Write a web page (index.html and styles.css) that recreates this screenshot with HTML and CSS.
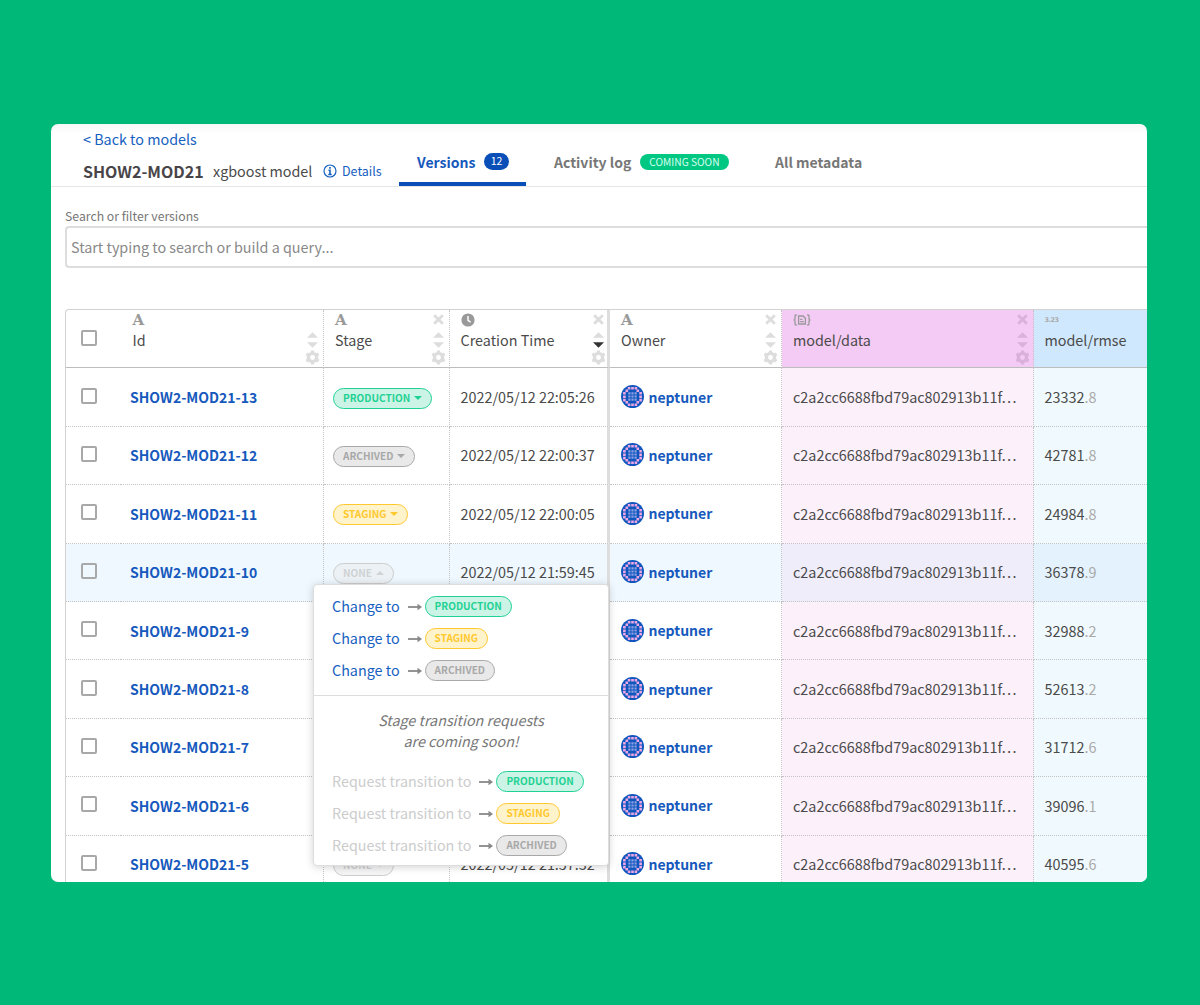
FILE: index.html
```html
<!DOCTYPE html>
<html lang="en">
<head>
    <meta charset="UTF-8">
    <meta name="viewport" content="width=device-width, initial-scale=1.0">
    <title>SHOW2-MOD21 - Versions</title>
    <link rel="stylesheet" href="styles.css">
</head>
<body>
    <svg class="sprite" width="0" height="0">
        <symbol id="close" viewBox="0 0 12 12"><path d="M2 2l8 8M10 2l-8 8" stroke="currentColor" stroke-width="2.6"/></symbol>
        <symbol id="up" viewBox="0 0 12 6"><path d="M0 6l6-6 6 6z" fill="currentColor"/></symbol>
        <symbol id="down" viewBox="0 0 12 6"><path d="M0 0h12l-6 6z" fill="currentColor"/></symbol>
        <symbol id="gear" viewBox="0 0 16 16">
            <circle cx="8" cy="8" r="4.4" fill="none" stroke="currentColor" stroke-width="3.6"/>
            <path d="M8 .5v3M8 12.5v3M1.5 4.2l2.6 1.5M11.9 10.3l2.6 1.5M1.5 11.8l2.6-1.5M11.9 5.7l2.6-1.5" stroke="currentColor" stroke-width="3.4"/>
        </symbol>
        <symbol id="arrow" viewBox="0 0 14 8"><path d="M0 4h11" stroke="currentColor" stroke-width="1.8"/><path d="M9.5 .8L14 4 9.5 7.2z" fill="currentColor"/></symbol>
        <symbol id="avatar" viewBox="0 0 23 23">
            <circle cx="11.5" cy="11.5" r="11.5" fill="#0f56bd"/>
            <g fill="none" stroke="#f0a8e4" stroke-width="2.6" stroke-dasharray="2.6 .8">
                <path d="M6.8 3.2h9.6M6.8 19.8h9.6M3.4 7v9.600M19.600 7v9.600"/>
                <path d="M4.500 5.800h3M15.500 5.800h3M4.500 17.200h3M15.500 17.200h3"/>
            </g>
            <g fill="none" stroke="#8fa0e4" stroke-width="2.2" stroke-dasharray="2.2 .9">
                <path d="M7.300 8.400h8.400M7.300 11.500h8.400M7.300 14.600h8.400"/>
            </g>
        </symbol>
    </svg>

    <div class="window">
        <header class="header">
            <div class="model">
                <a class="back">&lt; Back to models</a>
                <div class="model-title">
                    <h1>SHOW2-MOD21</h1>
                    <span class="model-name">xgboost model</span>
                    <a class="details">
                        <svg width="14" height="14" viewBox="0 0 14 14"><circle cx="7" cy="7" r="6" fill="none" stroke="currentColor" stroke-width="1.2"/><path d="M7 3v1.8M5.5 6.2H7v4.2M5.3 10.5h3.4" fill="none" stroke="currentColor" stroke-width="1.6"/></svg>
                        <span>Details</span>
                    </a>
                </div>
            </div>
            <nav class="tabs">
                <a class="tab active">Versions <span class="count">12</span></a>
                <a class="tab">Activity log <span class="soon">COMING SOON</span></a>
                <a class="tab">All metadata</a>
            </nav>
        </header>

        <div class="search">
            <label>Search or filter versions</label>
            <div class="search-input">Start typing to search or build a query...</div>
        </div>

        <div class="table">
            <div class="row head">
                <div class="cell check"><span class="box"></span></div>
                <div class="cell id"><div class="col-name"><span class="type">A</span>Id</div><div class="tools"><svg class="x"></svg><svg class="up"><use href="#up"/></svg><svg class="down"><use href="#down"/></svg><svg class="gear"><use href="#gear"/></svg></div></div>
                <div class="cell stage"><div class="col-name"><span class="type">A</span>Stage</div><div class="tools"><svg class="x"><use href="#close"/></svg><svg class="up"><use href="#up"/></svg><svg class="down"><use href="#down"/></svg><svg class="gear"><use href="#gear"/></svg></div></div>
                <div class="cell time"><div class="col-name"><span class="type"><svg width="14" height="14" viewBox="0 0 14 14"><circle cx="7" cy="7" r="6.6" fill="currentColor"/><path d="M7 3v4.4l2.6 1.8" fill="none" stroke="#fff" stroke-width="1.5"/></svg></span>Creation Time</div><div class="tools"><svg class="x"><use href="#close"/></svg><svg class="up"><use href="#up"/></svg><svg class="down sorted"><use href="#down"/></svg><svg class="gear"><use href="#gear"/></svg></div></div>
                <div class="cell owner"><div class="col-name"><span class="type">A</span>Owner</div><div class="tools"><svg class="x"><use href="#close"/></svg><svg class="up"><use href="#up"/></svg><svg class="down"><use href="#down"/></svg><svg class="gear"><use href="#gear"/></svg></div></div>
                <div class="cell data"><div class="col-name"><span class="type"><svg width="18" height="12" viewBox="0 0 18 12" fill="none" stroke="currentColor" stroke-width="1.3"><path d="M3.8 1H3Q2 1 2 2v2.5Q2 6 .6 6 2 6 2 7.5V10q0 1 1 1h.8M14.2 1h.8q1 0 1 1v2.5q0 1.500 1.400 1.500-1.400 0-1.400 1.500V10q0 1-1 1h-.8"/><path d="M5.600 2h4.600l2.200 2.200V10H5.600zM7.200 5.300h2.200M7.200 7.700h3.600"/></svg></span>model/data</div><div class="tools"><svg class="x"><use href="#close"/></svg><svg class="up"><use href="#up"/></svg><svg class="down"><use href="#down"/></svg><svg class="gear"><use href="#gear"/></svg></div></div>
                <div class="cell rmse"><div class="col-name"><span class="type num">3.23</span>model/rmse</div></div>
            </div>
            <div class="row">
                <div class="cell check"><span class="box"></span></div>
                <div class="cell id">SHOW2-MOD21-13</div>
                <div class="cell stage"><span class="badge production">PRODUCTION <svg><use href="#down"/></svg></span></div>
                <div class="cell time">2022/05/12 22:05:26</div>
                <div class="cell owner"><svg class="avatar"><use href="#avatar"/></svg>neptuner</div>
                <div class="cell data">c2a2cc6688fbd79ac802913b11f…</div>
                <div class="cell rmse">23332<span>.8</span></div>
            </div>
            <div class="row">
                <div class="cell check"><span class="box"></span></div>
                <div class="cell id">SHOW2-MOD21-12</div>
                <div class="cell stage"><span class="badge archived">ARCHIVED <svg><use href="#down"/></svg></span></div>
                <div class="cell time">2022/05/12 22:00:37</div>
                <div class="cell owner"><svg class="avatar"><use href="#avatar"/></svg>neptuner</div>
                <div class="cell data">c2a2cc6688fbd79ac802913b11f…</div>
                <div class="cell rmse">42781<span>.8</span></div>
            </div>
            <div class="row">
                <div class="cell check"><span class="box"></span></div>
                <div class="cell id">SHOW2-MOD21-11</div>
                <div class="cell stage"><span class="badge staging">STAGING <svg><use href="#down"/></svg></span></div>
                <div class="cell time">2022/05/12 22:00:05</div>
                <div class="cell owner"><svg class="avatar"><use href="#avatar"/></svg>neptuner</div>
                <div class="cell data">c2a2cc6688fbd79ac802913b11f…</div>
                <div class="cell rmse">24984<span>.8</span></div>
            </div>
            <div class="row selected">
                <div class="cell check"><span class="box"></span></div>
                <div class="cell id">SHOW2-MOD21-10</div>
                <div class="cell stage"><span class="badge none">NONE <svg><use href="#up"/></svg></span></div>
                <div class="cell time">2022/05/12 21:59:45</div>
                <div class="cell owner"><svg class="avatar"><use href="#avatar"/></svg>neptuner</div>
                <div class="cell data">c2a2cc6688fbd79ac802913b11f…</div>
                <div class="cell rmse">36378<span>.9</span></div>
            </div>
            <div class="row">
                <div class="cell check"><span class="box"></span></div>
                <div class="cell id">SHOW2-MOD21-9</div>
                <div class="cell stage"></div>
                <div class="cell time"></div>
                <div class="cell owner"><svg class="avatar"><use href="#avatar"/></svg>neptuner</div>
                <div class="cell data">c2a2cc6688fbd79ac802913b11f…</div>
                <div class="cell rmse">32988<span>.2</span></div>
            </div>
            <div class="row">
                <div class="cell check"><span class="box"></span></div>
                <div class="cell id">SHOW2-MOD21-8</div>
                <div class="cell stage"></div>
                <div class="cell time"></div>
                <div class="cell owner"><svg class="avatar"><use href="#avatar"/></svg>neptuner</div>
                <div class="cell data">c2a2cc6688fbd79ac802913b11f…</div>
                <div class="cell rmse">52613<span>.2</span></div>
            </div>
            <div class="row">
                <div class="cell check"><span class="box"></span></div>
                <div class="cell id">SHOW2-MOD21-7</div>
                <div class="cell stage"></div>
                <div class="cell time"></div>
                <div class="cell owner"><svg class="avatar"><use href="#avatar"/></svg>neptuner</div>
                <div class="cell data">c2a2cc6688fbd79ac802913b11f…</div>
                <div class="cell rmse">31712<span>.6</span></div>
            </div>
            <div class="row">
                <div class="cell check"><span class="box"></span></div>
                <div class="cell id">SHOW2-MOD21-6</div>
                <div class="cell stage"></div>
                <div class="cell time"></div>
                <div class="cell owner"><svg class="avatar"><use href="#avatar"/></svg>neptuner</div>
                <div class="cell data">c2a2cc6688fbd79ac802913b11f…</div>
                <div class="cell rmse">39096<span>.1</span></div>
            </div>
            <div class="row">
                <div class="cell check"><span class="box"></span></div>
                <div class="cell id">SHOW2-MOD21-5</div>
                <div class="cell stage"><span class="badge none">NONE <svg><use href="#down"/></svg></span></div>
                <div class="cell time">2022/05/12 21:57:32</div>
                <div class="cell owner"><svg class="avatar"><use href="#avatar"/></svg>neptuner</div>
                <div class="cell data">c2a2cc6688fbd79ac802913b11f…</div>
                <div class="cell rmse">40595<span>.6</span></div>
            </div>
        </div>

        <div class="menu">
            <div class="menu-items">
                <a class="item">Change to <svg><use href="#arrow"/></svg><span class="badge production">PRODUCTION</span></a>
                <a class="item">Change to <svg><use href="#arrow"/></svg><span class="badge staging">STAGING</span></a>
                <a class="item">Change to <svg><use href="#arrow"/></svg><span class="badge archived">ARCHIVED</span></a>
            </div>
            <p class="note">Stage transition requests<br>are coming soon!</p>
            <div class="menu-items disabled">
                <div class="item">Request transition to <svg><use href="#arrow"/></svg><span class="badge production">PRODUCTION</span></div>
                <div class="item">Request transition to <svg><use href="#arrow"/></svg><span class="badge staging">STAGING</span></div>
                <div class="item">Request transition to <svg><use href="#arrow"/></svg><span class="badge archived">ARCHIVED</span></div>
            </div>
        </div>
    </div>
</body>
</html>
```

FILE: styles.css
```css
* {
    box-sizing: border-box;
}

body {
    margin: 0;
    height: 1005px;
    padding: 124px 53px 0 51px;
    background-color: #00b877;
    font-family: "Noto Sans CJK JP", "Noto Sans", sans-serif;
    font-size: 14.35px;
    line-height: 20px;
    color: #4a4a4a;
    overflow: hidden;
}

.sprite {
    position: absolute;
}

.window {
    position: relative;
    height: 757.5px;
    background: linear-gradient(#f8f8f8, #fff 10px);
    border-radius: 7px;
    overflow: hidden;
}

/* header */
.header {
    display: flex;
    height: 63px;
    border-bottom: 1.5px solid #e6e6e6;
}

.model {
    width: 348px;
    padding: 5px 0 0 32px;
    white-space: nowrap;
}

.back {
    display: block;
    color: #1660c0;
}

.model-title {
    display: flex;
    align-items: center;
    margin-top: 11px;
}

h1 {
    width: 130px;
    margin: 0;
    font-size: 16px;
    font-weight: bold;
    line-height: 20px;
    color: #484448;
}

.model-name {
    width: 110px;
}

.details {
    display: flex;
    align-items: center;
    gap: 5px;
    padding-top: 1px;
    font-size: 12.5px;
    color: #1660c0;
}

.tabs {
    display: flex;
    font-size: 14px;
    font-weight: bold;
    color: #777;
}

.tab {
    display: flex;
    align-items: center;
    height: 62px;
    padding: 13px 0 0 28px;
    white-space: nowrap;
}

.tab.active {
    width: 127px;
    height: 62px;
    padding: 17px 0 0 18px;
    border-bottom: 4px solid #0a4fb8;
    color: #1659bd;
}

.tab:last-child {
    padding-left: 46.5px;
}

.count {
    margin-left: 9px;
    padding: 0 6.3px;
    height: 17px;
    margin-bottom: 1px;
    border-radius: 9px;
    background: #0a4fb8;
    color: #fff;
    font-size: 10.5px;
    font-weight: normal;
    line-height: 15px;
}

.soon {
    margin-left: 9px;
    padding: 0 9px;
    height: 16px;
    border-radius: 8px;
    background: #00c781;
    color: #d8fff0;
    font-size: 10.2px;
    font-weight: normal;
    line-height: 15px;
}

/* search */
.search {
    padding: 19px 0 0 14px;
}

.search label {
    display: block;
    font-size: 12.25px;
    color: #777;
}

.search-input {
    height: 42px;
    padding: 9px 4px;
    border: 2px solid #ddd;
    border-right: 0;
    border-radius: 4px 0 0 4px;
    color: #888;
}

/* table */
.table {
    margin: 41px 0 0 14px;
    border: 1.5px solid #d2d2d2;
    border-width: 1px 0 0 1px;
    border-radius: 4px 0 0 0;
    font-size: 14.4px;
    overflow: hidden;
}

.row {
    display: flex;
    height: 58.4px;
}

.cell {
    display: flex;
    align-items: center;
    flex: none;
    padding-left: 11px;
    border-right: 1px dotted #c4c4c4;
    border-bottom: 1px dotted #c4c4c4;
    white-space: nowrap;
}

.check {
    width: 55px;
    padding: 0 0 3px 15px;
    border-right: 0;
}

.box {
    width: 16px;
    height: 16px;
    border: 2px solid #a8a8a8;
    border-radius: 2px;
}

.id {
    width: 202.5px;
    padding-left: 9px;
    color: #1659bd;
    font-size: 14px;
    font-weight: bold;
}

.stage {
    width: 126px;
    padding-left: 9.5px;
}

.time {
    width: 160.5px;
    border-right: 3px solid #ddd;
}

.owner {
    width: 171.5px;
    padding: 0 0 1px 11px;
    color: #1659bd;
    font-size: 14px;
    font-weight: bold;
}

.data {
    width: 252px;
    padding-left: 11.5px;
    background: #fcf0fa;
}

.rmse {
    width: 115.5px;
    border-right: 0;
    background: #f0f9fd;
}

.rmse span {
    color: #aaa;
}

.selected .cell {
    background: #eff8ff;
}

.selected .data {
    background: #efedfa;
}

.selected .rmse {
    background: #e4f2fd;
}

.avatar {
    width: 23px;
    height: 23px;
    margin-right: 4.5px;
}

.head .cell {
    align-items: flex-start;
    border-bottom: 1.5px solid #bdbdbd;
    color: #4a4a4a;
    font-size: 14.35px;
    font-weight: normal;
}

.head .check {
    align-items: center;
    padding-bottom: 1px;
}

.head .data {
    background: #f4cbf4;
}

.head .rmse {
    background: #d0e8fd;
}

.col-name {
    flex: 1;
}

.head .id {
    padding-left: 11.5px;
}

.head .stage {
    padding-left: 11.5px;
}

.type {
    display: flex;
    align-items: center;
    height: 20px;
    font-family: "DejaVu Serif", serif;
    font-size: 15px;
    font-weight: bold;
    color: #999;
}

.type.num {
    font-family: "DejaVu Sans", sans-serif;
    font-size: 6.5px;
    letter-spacing: -0.5px;
}

.tools {
    display: flex;
    flex-direction: column;
    align-items: center;
    width: 15px;
    margin-right: 3px;
    padding-top: 3px;
    color: #ddd;
}

.time .tools {
    margin-right: 1.5px;
}

.data .tools {
    color: #d9b1db;
}

.x {
    width: 13px;
    height: 13px;
}

.up {
    width: 11px;
    height: 6px;
    margin-top: 6px;
}

.down {
    width: 11px;
    height: 6px;
    margin: 4px 0 2px;
}

.down.sorted {
    color: #333;
}

.gear {
    width: 15px;
    height: 15px;
}

/* stage badges */
.badge {
    display: flex;
    align-items: center;
    height: 21px;
    padding: 0 9px 1px;
    border: 1.5px solid;
    border-radius: 11px;
    font-size: 10.05px;
    font-weight: bold;
    line-height: 16px;
}

.badge svg {
    width: 8px;
    height: 4px;
    margin-left: 4px;
}

.row .badge {
    margin-top: 2px;
}

.production {
    color: #1fd193;
    background: #ccf4e6;
}

.staging {
    color: #ffc82e;
    background: #fff3cc;
}

.archived {
    color: #a8a8a8;
    background: #e9e9e9;
}

.none {
    color: #d0d2d4;
    border-color: #ccc;
    background: rgba(230, 230, 230, 0.4);
}

/* stage menu, over the table */
.menu {
    position: absolute;
    left: 262px;
    top: 460px;
    width: 296px;
    height: 282px;
    background: #fff;
    border: 1px solid #ddd;
    border-radius: 4px;
    box-shadow: 0 1px 8px rgba(0, 0, 0, 0.18);
}

.menu-items {
    padding: 5px 0 9px 18px;
    font-size: 14.35px;
    color: #1660c0;
}

.item {
    display: flex;
    align-items: center;
    height: 32px;
}

.item .badge {
    margin-top: 1px;
}

.item svg {
    width: 14px;
    height: 8px;
    margin: 1px 3px 0 8px;
    color: #888;
}

.note {
    margin: 0;
    padding: 13px 0 14px;
    border-top: 1.5px solid #ddd;
    font-size: 14.35px;
    font-style: italic;
    line-height: 21px;
    text-align: center;
    color: #777;
}

.disabled {
    padding: 0 0 0 18px;
    color: #ccc;
}
```
